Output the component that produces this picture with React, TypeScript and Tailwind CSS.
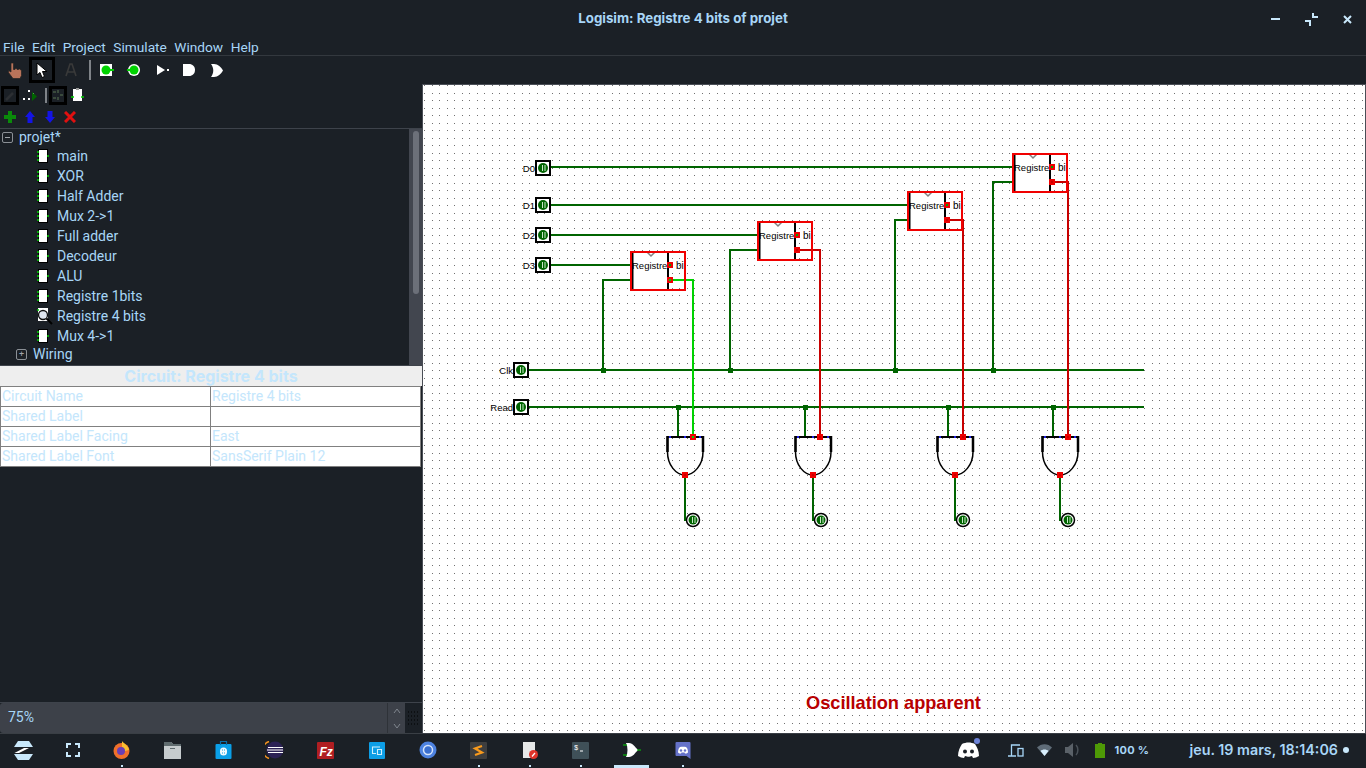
import { ReactNode } from 'react';

const treeItems = ['main', 'XOR', 'Half Adder', 'Mux 2->1', 'Full adder', 'Decodeur', 'ALU', 'Registre 1bits', 'Registre 4 bits', 'Mux 4->1'];

const attrs = [
  ['Circuit Name', 'Registre 4 bits'],
  ['Shared Label', ''],
  ['Shared Label Facing', 'East'],
  ['Shared Label Font', 'SansSerif Plain 12'],
];

// Logisim grid: one dot every 7.5px at 75% zoom
function gridPath() {
  let d = '';
  for (let x = 0; x < 126; x++) {
    for (let y = 0; y < 87; y++) {
      d += `M${Math.round(x * 7.5) + 1} ${Math.round(y * 7.5) + 1}h1v1h-1z`;
    }
  }
  return d;
}

const DARK = '#006400';
const GREEN = '#00d200';
const RED = '#c80000';
const FONT = 'Liberation Sans, sans-serif';

function Wire({ d, color = DARK }: { d: string; color?: string }) {
  return <path d={d} fill="none" stroke={color} strokeWidth="2" shapeRendering="crispEdges" />;
}

function Port({ x, y, fill = 'none' }: { x: number; y: number; fill?: string }) {
  return <rect x={x - 2} y={y - 2} width="4" height="4" fill={fill} stroke="#ee0000" strokeWidth="2" shapeRendering="crispEdges" />;
}

function InPin({ x, y, label }: { x: number; y: number; label: string }) {
  return (
    <g>
      <text x={x - 8} y={y + 3.500} textAnchor="end" fontSize="9.500" fontFamily={FONT} fill="#000">{label}</text>
      <rect x={x - 7} y={y - 7} width="14" height="14" fill="#fff" stroke="#000" strokeWidth="2" />
      <circle cx={x} cy={y} r="5" fill={DARK} />
      <path d={`M${x - 0.500} ${y - 3}v6M${x + 2} ${y - 3}v6`} stroke="#c8e8c8" strokeWidth="1" />
    </g>
  );
}

function Register({ x, y, center = RED }: { x: number; y: number; center?: string }) {
  return (
    <g>
      <rect x={x + 2} y={y + 1} width="36" height="38" fill="#fff" />
      <path d={`M${x + 2.500} ${y}v39M${x + 38} ${y}v39`} stroke="#000" strokeWidth="2" />
      <path d={`M${x + 17} ${y + 1}l4 4l4 -4`} fill="none" stroke="#808080" strokeWidth="1.500" />
      <text x={x + 2} y={y + 18} fontSize="9.500" fontFamily={FONT} fill="#000">Registre</text>
      <text x={x + 46} y={y + 18} fontSize="10" fontFamily={FONT} fill="#000">bi</text>
      <rect x={x + 1} y={y + 1} width="54" height="38" fill="none" stroke="#f00000" strokeWidth="2" />
      <Port x={x + 40} y={y + 14} fill="#00a000" />
      <Port x={x + 40} y={y + 29} fill={center} />
    </g>
  );
}

function AndGate({ cx }: { cx: number }) {
  return (
    <g>
      <path d={`M${cx - 17.500} 437H${cx + 18}V452C${cx + 18} 465 ${cx + 9} 475 ${cx} 475S${cx - 17.500} 465 ${cx - 17.500} 452Z`} fill="none" stroke="#000" strokeWidth="1.500" />
      <path d={`M${cx - 17.500} 436V452M${cx + 18} 436V452`} stroke="#000" strokeWidth="2.500" />
      <path d={`M${cx - 18} 437H${cx + 19}`} stroke="#000" strokeWidth="2" />
      <rect x={cx - 16} y="436" width="2" height="2" fill="#2020e0" />
      <rect x={cx - 1} y="436" width="2" height="2" fill="#2020e0" />
      <rect x={cx + 14} y="436" width="2" height="2" fill="#2020e0" />
      <Wire d={`M${cx} 475V520H${cx + 8}`} />
      <Port x={cx} y={475} fill={RED} />
      <circle cx={cx + 8} cy="520" r="6.500" fill="#fff" stroke="#000" strokeWidth="1.500" />
      <circle cx={cx + 8} cy="520" r="4.500" fill={DARK} />
      <path d={`M${cx + 7.500} 517v6M${cx + 10} 517v6`} stroke="#c8e8c8" strokeWidth="1" />
    </g>
  );
}

function Circuit() {
  return (
    <svg width="942" height="648" viewBox="423 85 942 648" className="block">
      <path d={gridPath()} transform="translate(423 84)" fill="#707070" shapeRendering="crispEdges" />
      <Wire d="M528 370H1144" />
      <Wire d="M528 407H1144" />
      <Wire d="M551 167H1013" />
      <Wire d="M551 205H908" />
      <Wire d="M551 235H758" />
      <Wire d="M551 265H631" />
      <Wire d="M603 370V280H631" />
      <Wire d="M730 370V250H758" />
      <Wire d="M895 370V220H908" />
      <Wire d="M993 370V182H1013" />
      <Wire d="M678 407V437" />
      <Wire d="M805 407V437" />
      <Wire d="M948 407V437" />
      <Wire d="M1053 407V437" />
      {[603, 730, 895, 993].map((x) => <rect key={x} x={x - 2} y="368" width="5" height="5" fill={DARK} />)}
      {[678, 805, 948, 1053].map((x) => <rect key={x} x={x - 2} y="405" width="5" height="5" fill={DARK} />)}
      <Wire d="M670 280H693V437" color={GREEN} />
      <Wire d="M798 250H820V437" color={RED} />
      <Wire d="M948 220H963V437" color={RED} />
      <Wire d="M1053 182H1068V437" color={RED} />
      <Register x={630} y={251} center={GREEN} />
      <Register x={757} y={221} />
      <Register x={907} y={191} />
      <Register x={1012} y={153} />
      <InPin x={543} y={168} label="D0" />
      <InPin x={543} y={205} label="D1" />
      <InPin x={543} y={235} label="D2" />
      <InPin x={543} y={265} label="D3" />
      <InPin x={521} y={370} label="Clk" />
      <InPin x={521} y={407} label="Read" />
      {[685, 813, 955, 1060].map((cx) => <AndGate key={cx} cx={cx} />)}
      <Port x={693} y={437} fill={GREEN} />
      {[820, 963, 1068].map((x) => <Port key={x} x={x} y={437} fill={RED} />)}
      <text x="806" y="708.500" fontSize="18.200" fontWeight="700" fontFamily={FONT} fill="#b80000">Oscillation apparent</text>
    </svg>
  );
}

function ChipIcon() {
  return (
    <svg width="12" height="14" viewBox="0 0 12 14" className="shrink-0">
      <rect x="1.500" y="0.500" width="9" height="13" fill="#fff" stroke="#000" />
      <path d="M0 3h2M0 7h2M0 11h2M10 7h2" stroke="#00d200" strokeWidth="1.500" />
    </svg>
  );
}

function LoupeChipIcon() {
  return (
    <svg width="16" height="18" viewBox="0 0 16 18" className="shrink-0 -mr-[4px] -my-[1px]">
      <rect x="1" y="1" width="10" height="13" fill="#fff" />
      <path d="M0 3h2" stroke="#00d200" strokeWidth="1.500" />
      <circle cx="6" cy="8" r="4.500" fill="#dfe6f0" stroke="#111" strokeWidth="1.300" />
      <path d="M9.500 11.500l5.500 5.500" stroke="#000" strokeWidth="2" />
    </svg>
  );
}

function ToolBtn({ children, boxed }: { children: ReactNode; boxed?: boolean }) {
  return (
    <div className={`w-[26px] h-[26px] flex items-center justify-center ${boxed ? 'border-[3px] border-black' : ''}`}>
      {children}
    </div>
  );
}

function Toolbar() {
  return (
    <div className="h-[28px] flex items-center pl-[2px]">
      <ToolBtn>
        <svg width="16" height="17" viewBox="0 0 16 17">
          <path d="M4 1h2.500v6.500h1.500v-1h2v1h1.500v-.5h2v1h1v5.500l-1.500 3h-7l-4.500-6v-2l2.500 1.500z" fill="#b8735a" stroke="#222" strokeWidth="0.700" />
        </svg>
      </ToolBtn>
      <div className="ml-[1px]">
        <ToolBtn boxed>
          <svg width="13" height="17" viewBox="0 0 13 17">
            <path d="M1 1v12l3-2.500 2 5 2.500-1-2-5h4.500z" fill="#fff" stroke="#000" />
          </svg>
        </ToolBtn>
      </div>
      <div className="ml-[3px]">
        <ToolBtn>
          <svg width="12" height="14" viewBox="0 0 12 14">
            <path d="M1 13 5 1h2l4 12M3 9h6" fill="none" stroke="#3a3a3a" strokeWidth="1.600" />
          </svg>
        </ToolBtn>
      </div>
      <div className="w-[2px] h-[20px] bg-[#7f8388] ml-[5px]" />
      <svg width="14" height="12" viewBox="0 0 14 12" className="ml-[9px]">
        <rect width="12" height="12" fill="#fff" />
        <circle cx="6" cy="6" r="4.500" fill="#00d200" />
        <path d="M10 6h4" stroke="#00d200" strokeWidth="2" />
      </svg>
      <svg width="13" height="12" viewBox="0 0 13 12" className="ml-[13px]">
        <circle cx="7" cy="6" r="6" fill="#fff" />
        <circle cx="7" cy="6" r="4.500" fill="#00d200" />
        <path d="M0 6h3" stroke="#00d200" strokeWidth="2" />
      </svg>
      <svg width="14" height="12" viewBox="0 0 14 12" className="ml-[16px]">
        <path d="M1 1v10l8-5z" fill="#fff" />
        <rect x="11" y="5" width="2" height="2" fill="#fff" />
      </svg>
      <svg width="12" height="12" viewBox="0 0 12 12" className="ml-[13px]">
        <path d="M0 0h6c3.500 0 6 2.500 6 6s-2.500 6-6 6H0z" fill="#fff" />
      </svg>
      <svg width="12" height="13" viewBox="0 0 12 13" className="ml-[16px]">
        <path d="M0 0h3c4 0 7 3 9 6.500-2 3.500-5 6.500-9 6.500H0c3-4 3-9 0-13z" fill="#fff" />
      </svg>
    </div>
  );
}

function LeftPanel() {
  return (
    <div className="w-[423px] shrink-0 flex flex-col border-r border-[#4a4e56]">
      {/* explorer tools */}
      <div className="h-[22px] flex items-center pl-[1px]">
        <div className="w-[18px] h-[19px] border-[3px] border-black flex items-center justify-center">
          <svg width="12" height="13" viewBox="0 0 12 13"><path d="M2 11 9 4" stroke="#2c2f33" strokeWidth="2.500" /></svg>
        </div>
        <svg width="15" height="14" viewBox="0 0 15 14" className="ml-[4px]">
          <path d="M0 11h2M5 3h2M5 11h2M9 6h2" stroke="#fff" strokeWidth="2" />
          <path d="M9 4v9l5-4.500z" fill="#006400" />
        </svg>
        <div className="w-[2px] h-[15px] bg-[#7f8388] ml-[7px]" />
        <div className="w-[18px] h-[19px] border-[3px] border-black ml-[2px] flex items-center justify-center">
          <svg width="12" height="13" viewBox="0 0 12 13"><path d="M1 3h3M1 9h3M8 6h3M6 1v3M6 8v3" stroke="#3a4a3c" strokeWidth="2" /></svg>
        </div>
        <svg width="13" height="14" viewBox="0 0 13 14" className="ml-[4px]">
          <rect x="2" y="1" width="9" height="12" fill="#fff" />
          <rect x="5" y="0" width="3" height="2" fill="#9a9a9a" />
          <path d="M0 9h3M10 9h3" stroke="#00d200" strokeWidth="1.500" />
        </svg>
      </div>
      <div className="h-[22px] flex items-center gap-[8px] pl-[4px]">
        <svg width="12" height="12" viewBox="0 0 12 12"><path d="M4 0h4v4h4v4H8v4H4V8H0V4h4z" fill="#0a8a0a" /></svg>
        <svg width="12" height="12" viewBox="0 0 12 12"><path d="M6 0l5 6H8.500v6h-5V6H1z" fill="#1414e6" /></svg>
        <svg width="12" height="12" viewBox="0 0 12 12"><path d="M6 12l5-6H8.500V0h-5v6H1z" fill="#1414e6" /></svg>
        <svg width="12" height="12" viewBox="0 0 12 12"><path d="M1 1l10 10M11 1 1 11" stroke="#e01010" strokeWidth="3" /></svg>
      </div>

      {/* project tree */}
      <div className="h-[238px] border-y border-[#3e434b] flex overflow-hidden font-['Roboto',sans-serif] text-[14px] text-[#a8d6f7]">
        <div className="flex-1">
          <div className="h-[17px] flex items-center pl-[2px] gap-[6px]">
            <span className="w-[11px] h-[11px] border border-[#8b9096] rounded-[2px] flex items-center justify-center">
              <span className="w-[5px] h-px bg-[#a0a5ab]" />
            </span>
            <span>projet*</span>
          </div>
          {treeItems.map((name) => (
            <div key={name} className="h-[20px] flex items-center pl-[37px] gap-[8px]">
              {name === 'Registre 4 bits' ? <LoupeChipIcon /> : <ChipIcon />}
              <span>{name}</span>
            </div>
          ))}
          <div className="h-[17px] flex items-center pl-[16px] gap-[6px]">
            <span className="w-[11px] h-[11px] border border-[#8b9096] rounded-[2px] flex items-center justify-center text-[9px] leading-none text-[#a0a5ab]">+</span>
            <span>Wiring</span>
          </div>
        </div>
        <div className="w-[13px] bg-[#42464f] flex justify-center pt-[2px]">
          <div className="w-[6px] h-[163px] rounded-full bg-[#6c7079]" />
        </div>
      </div>

      {/* attribute table */}
      <div className="h-[20px] bg-[#eeeeee] flex items-center justify-center font-['Inter',sans-serif] font-bold text-[16px] text-[#c4e6fc]">
        Circuit: Registre 4 bits
      </div>
      <div className="mr-[1px] border border-[#808080] bg-white font-['Roboto',sans-serif] text-[14px] text-[#c4e6fc]">
        {attrs.map(([k, v], i) => (
          <div key={k} className={`flex items-center ${i < 3 ? 'h-[20px] border-b border-[#808080]' : 'h-[19px]'}`}>
            <div className="w-[210px] pl-[1px] pb-[1px] h-full flex items-center border-r border-[#808080]">{k}</div>
            <div className="pl-[1px] pb-[1px]">{v}</div>
          </div>
        ))}
      </div>
      <div className="flex-1" />

      {/* zoom spinner */}
      <div className="h-[31px] flex border-t border-[#3e434b]">
        <div className="w-[387px] bg-[#3d4149] rounded-l-[3px] flex items-center pl-[8px] pb-[1px] font-['Roboto',sans-serif] text-[14px] text-[#a8d6f7]">75%</div>
        <div className="w-[18px] bg-[#3d4149] border-l border-[#2e3238] flex flex-col items-center justify-around">
          <svg width="8" height="6" viewBox="0 0 8 6"><path d="M1 5l3-4 3 4" fill="none" stroke="#80868e" /></svg>
          <svg width="8" height="6" viewBox="0 0 8 6"><path d="M1 1l3 4 3-4" fill="none" stroke="#80868e" /></svg>
        </div>
        <div className="flex-1 flex items-center justify-center">
          <svg width="12" height="14" viewBox="0 0 12 14">
            <path d="M0 1h12M0 5h12M0 9h12M0 13h12" stroke="#000" strokeDasharray="1 2" />
          </svg>
        </div>
      </div>
    </div>
  );
}

function TaskIcon({ children, active, dot }: { children: ReactNode; active?: boolean; dot?: boolean }) {
  return (
    <div className="relative w-[51px] h-[34px] pb-[2px] flex items-center justify-center">
      {children}
      {dot && <span className="absolute bottom-[1px] left-1/2 -ml-px w-[2px] h-[2px] bg-[#c9e8fb]" />}
      {active && <span className="absolute bottom-0 left-[8px] right-[8px] h-[3px] bg-[#c9e8fb]" />}
    </div>
  );
}

function Taskbar() {
  return (
    <div className="h-[35px] border-t border-[#3a3f45] bg-[#1b2026] flex items-start">
      <div className="flex items-center -ml-[2px]">
        <TaskIcon>
          <svg width="21" height="19" viewBox="0 0 21 19">
            <path d="M5 0h11l4 6H11L3 6l-2 0z" fill="#c9e8fb" />
            <path d="M16 7 6 12H1.500L11 7z" fill="#fff" />
            <path d="M1 13h19l-4 6H5z" fill="#c9e8fb" />
          </svg>
        </TaskIcon>
        <div className="w-[47px] flex justify-center pb-[2px]">
          <svg width="14" height="14" viewBox="0 0 14 14"><path d="M1 5V1h4M9 1h4v4M13 9v4H9M5 13H1V9" fill="none" stroke="#c9e8fb" strokeWidth="2" /></svg>
        </div>
        <TaskIcon dot>
          <svg width="17" height="18" viewBox="0 0 17 18">
            <circle cx="8.500" cy="10" r="8" fill="#f0702a" />
            <path d="M9 0c1 2 6 4 7 9l-4 1c-1-3-2-4-3-4z" fill="#f8c030" />
            <circle cx="8" cy="10" r="4" fill="#6a3fb5" />
          </svg>
        </TaskIcon>
        <TaskIcon>
          <svg width="17" height="17" viewBox="0 0 17 17">
            <path d="M0 0h7l2 2h8v15H0z" fill="#c6ccce" />
            <path d="M0 0h7l2 2h8v2H0z" fill="#5f6b6e" />
            <rect x="6" y="6" width="5" height="1" fill="#5f6b6e" />
          </svg>
        </TaskIcon>
        <TaskIcon>
          <svg width="17" height="18" viewBox="0 0 17 18">
            <rect x="0.500" y="3" width="16" height="15" rx="1" fill="#0a9fe8" />
            <path d="M5.500 4V0.500h6V4" fill="none" stroke="#0a6fa8" strokeWidth="1.200" />
            <rect x="5" y="6.500" width="7" height="8" rx="3.500" fill="#f0fafe" />
            <path d="M7 9h3M7 12h3" stroke="#0a9fe8" strokeDasharray="1 1" />
          </svg>
        </TaskIcon>
        <TaskIcon>
          <svg width="19" height="18" viewBox="0 0 19 18">
            <circle cx="10" cy="9" r="8.500" fill="#2c2255" />
            <path d="M4 .500A9 9 0 0 0 4 17.500" fill="none" stroke="#f09020" strokeWidth="1.500" />
            <path d="M3 6.500h15M2 9h16M3 11.500h15" stroke="#fff" strokeWidth="1.200" />
          </svg>
        </TaskIcon>
        <TaskIcon>
          <svg width="17" height="17" viewBox="0 0 17 17">
            <rect width="17" height="17" rx="1" fill="#b01e22" />
            <text x="2.500" y="13.500" fontSize="12" fontWeight="700" fontStyle="italic" fontFamily={FONT} fill="#fff">Fz</text>
          </svg>
        </TaskIcon>
        <TaskIcon>
          <svg width="16" height="17" viewBox="0 0 16 17">
            <rect width="16" height="17" rx="1" fill="#0d9ee6" />
            <path d="M3.500 11.500V5H11M3 11.500h4M8.500 7.500h4v5h-4z" fill="none" stroke="#cdeefc" strokeWidth="1.100" />
          </svg>
        </TaskIcon>
        <TaskIcon>
          <svg width="18" height="18" viewBox="0 0 18 18">
            <circle cx="9" cy="9" r="8.500" fill="#4d82e0" />
            <circle cx="9" cy="9" r="4.500" fill="#3a6fd0" stroke="#d5e4fa" strokeWidth="1.500" />
          </svg>
        </TaskIcon>
        <TaskIcon dot>
          <svg width="17" height="17" viewBox="0 0 17 17">
            <rect width="17" height="17" rx="1" fill="#3e3e3e" />
            <path d="M12 4 5 6.500l7 4-7 2.500" fill="none" stroke="#f89a1c" strokeWidth="2.200" />
          </svg>
        </TaskIcon>
        <TaskIcon dot>
          <svg width="16" height="17" viewBox="0 0 16 17">
            <rect x="1" y="0" width="12" height="16" fill="#e6e8e8" />
            <circle cx="11.500" cy="12.500" r="4.500" fill="#e0352b" />
            <path d="M10 14.500l3-3.500" stroke="#fff" strokeWidth="1.200" />
          </svg>
        </TaskIcon>
        <TaskIcon dot>
          <svg width="17" height="17" viewBox="0 0 17 17">
            <rect width="17" height="17" rx="1" fill="#3f5058" />
            <text x="2" y="8" fontSize="7" fontFamily="Liberation Mono, monospace" fill="#fff">$</text>
            <path d="M8 9h3" stroke="#fff" />
          </svg>
        </TaskIcon>
        <TaskIcon active>
          <svg width="18" height="14" viewBox="0 0 18 14">
            <path d="M3 0h3c4 0 6 4 9 7-3 3-5 7-9 7H3c2-4 2-10 0-14z" fill="#fff" />
            <path d="M14 7h4M0 2h4M0 12h4" stroke="#00d200" />
          </svg>
        </TaskIcon>
        <TaskIcon dot>
          <svg width="16" height="17" viewBox="0 0 16 17">
            <path d="M1.500 0h13a1 1 0 0 1 1 1v16l-4-3h-10a1 1 0 0 1-1-1V1a1 1 0 0 1 1-1z" fill="#6572c9" />
            <path d="M3 10.500c0-3 1-5 2-5.500 2-.5 4-.5 6 0 1 .5 2 2.500 2 5.500-1 1-2 1-3 1l-.5-1h-3l-.5 1c-1 0-2 0-3-1z" fill="#fff" />
            <circle cx="6" cy="8.500" r="1.200" fill="#6572c9" />
            <circle cx="10" cy="8.500" r="1.200" fill="#6572c9" />
          </svg>
        </TaskIcon>
      </div>
      <div className="flex-1" />
      {/* tray */}
      <div className="h-[34px] pb-[2px] flex items-center font-['Inter',sans-serif]">
        <span className="relative mr-[29px]">
          <svg width="21" height="16" viewBox="0 0 21 16" className="block">
            <path d="M4 2c4-2 9-2 13 0 2 3 4 7 4 12-2 1-4 2-6 2l-1-2c-3 1-4 1-7 0l-1 2c-2 0-4-1-6-2 0-5 2-9 4-12z" fill="#fff" />
            <circle cx="7" cy="9.500" r="2" fill="#1b2026" />
            <circle cx="14" cy="9.500" r="2" fill="#1b2026" />
          </svg>
          <span className="absolute -top-[4px] -right-[1px] w-[6px] h-[6px] rounded-full bg-[#6d83d8]" />
        </span>
        <svg width="16" height="13" viewBox="0 0 16 13" className="mr-[13px]">
          <path d="M3.500 12V1H12M0 12h8" fill="none" stroke="#a8d6f7" strokeWidth="1.300" />
          <rect x="10" y="4.500" width="5" height="7.500" fill="none" stroke="#a8d6f7" strokeWidth="1.300" />
        </svg>
        <svg width="15" height="12" viewBox="0 0 15 12" className="mr-[13px]">
          <path d="M0 3.500c4-4.500 11-4.500 15 0l-7.500 8.500z" fill="#5f6c78" />
          <path d="M3.500 7c2-2 6-2 8 0L7.500 12z" fill="#d8eefc" />
        </svg>
        <svg width="16" height="14" viewBox="0 0 16 14" className="mr-[14px]">
          <path d="M0 4h3l5-4v14l-5-4H0z" fill="#5a6168" />
          <path d="M11 2c2.500 2.500 2.500 7.500 0 10" fill="none" stroke="#4a5158" strokeWidth="1.500" />
        </svg>
        <svg width="10" height="15" viewBox="0 0 10 15" className="mr-[9px]">
          <path d="M3 0h4v1h3v14H0V1h3z" fill="#4e9a06" />
        </svg>
        <span className="text-[11px] font-bold text-[#a8d6f7] w-[75px] tracking-[0.3px]">100 %</span>
        <span className="text-[14.300px] font-semibold text-[#a8d6f7]">jeu. 19 mars, 18:14:06</span>
        <span className="w-[6px] h-[6px] rounded-full bg-[#c9e8fb] ml-[5px] mr-[17px]" />
      </div>
    </div>
  );
}

export default function App() {
  return (
    <div className="w-[1366px] h-[768px] bg-[#1b2026] overflow-hidden flex flex-col">
      {/* title bar */}
      <div className="h-[38px] flex items-center relative">
        <div className="flex-1 text-center font-['Inter',sans-serif] font-bold text-[13.300px] text-[#a8d6f7]">
          Logisim: Registre 4 bits of projet
        </div>
        <div className="absolute right-[14.500px] top-[13px] flex items-start gap-[25px]">
          <svg width="9" height="9" viewBox="0 0 9 9"><path d="M0 6h9" stroke="#c9e8fb" strokeWidth="2" /></svg>
          <svg width="13" height="13" viewBox="0 0 13 13"><path d="M8 0v4h5M0 8h5v5" fill="none" stroke="#c9e8fb" strokeWidth="2" /></svg>
          <svg width="9" height="9" viewBox="0 0 9 9" className="mt-[2px]"><path d="M1 1l7 7M8 1 1 8" stroke="#c9e8fb" strokeWidth="2" /></svg>
        </div>
      </div>
      {/* menu */}
      <div className="h-[18px] pt-[1px] border-b border-[#33383e] flex items-center pl-[3px] gap-[7.500px] font-['Roboto',sans-serif] text-[13.700px] text-[#a8d6f7]">
        {['File', 'Edit', 'Project', 'Simulate', 'Window', 'Help'].map((m) => <span key={m}>{m}</span>)}
      </div>
      <Toolbar />
      <div className="flex-1 flex min-h-0">
        <LeftPanel />
        <div className="flex-1 bg-white overflow-hidden border-t border-r border-[#4a4e56]">
          <Circuit />
        </div>
      </div>
      <Taskbar />
    </div>
  );
}
